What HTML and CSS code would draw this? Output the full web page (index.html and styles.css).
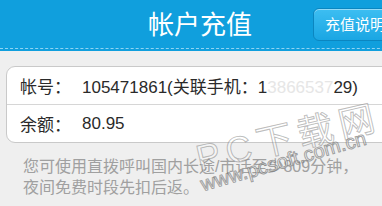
FILE: index.html
```html
<!DOCTYPE html>
<html lang="zh-CN">
<head>
<meta charset="utf-8">
<title>帐户充值</title>
<link rel="stylesheet" href="styles.css">
</head>
<body>
<div class="page">
  <header class="header">
    <div class="bar">
      <h1 class="title">帐户充值</h1>
      <button class="help-btn">充值说明</button>
    </div>
  </header>
  <section class="card">
    <div class="row">
      <span class="label">帐号：</span>
      <span class="value">105471861(关联手机：1<span class="blur">3866537</span>29)</span>
    </div>
    <div class="row">
      <span class="label">余额：</span>
      <span class="value">80.95</span>
    </div>
  </section>
  <p class="note">您可使用直拨呼叫国内长途/市话至少809分钟，<br>夜间免费时段先扣后返。</p>
  <div class="wm wm-big">PC下载网</div>
  <div class="wm wm-url">www.pcsoft.com.cn</div>
</div>
</body>
</html>
```

FILE: styles.css
```css
html, body {
  margin: 0;
  padding: 0;
  overflow: hidden;
  background: #efefef;
}
body {
  width: 382px;
  height: 206px;
  font-family: "Liberation Sans", "Noto Sans CJK SC", sans-serif;
}
.page {
  position: relative;
  width: 400px;
  height: 206px;
  background: #efefef;
}
.header {
  background: #109fdd;
  padding-bottom: 2px;
}
.bar {
  height: 49px;
  border-bottom: 1px dashed #8fd4f2;
  display: flex;
  align-items: center;
  box-sizing: border-box;
  padding-top: 1px;
}
.title {
  margin: 0 0 0 148px;
  font-size: 26px;
  font-weight: normal;
  color: #ffffff;
  line-height: 30px;
}
.help-btn {
  margin-left: auto;
  margin-right: 3px;
  height: 33px;
  margin-top: -1px;
  padding: 0 11px;
  border: 1px solid #0b86c0;
  border-radius: 6px;
  background: linear-gradient(#3dbef2, #1aa6e3);
  box-shadow: inset 0 1px 0 rgba(255,255,255,0.45);
  color: #ffffff;
  font-family: "Liberation Sans", "Noto Sans CJK SC", sans-serif;
  font-size: 15px;
  line-height: 31px;
}
.card {
  margin: 15px 6px 0 6px;
  background: #ffffff;
  border: 1px solid #c9c9c9;
  border-radius: 9px;
}
.row {
  height: 37px;
  display: flex;
  align-items: center;
  padding-left: 13px;
  font-size: 17px;
  color: #2a2a2a;
}
.row + .row {
  border-top: 1px solid #d6d6d6;
}
.label {
  width: 62px;
}
.blur {
  color: #e6e6e6;
}
.note {
  margin: 13px 0 0 23px;
  font-size: 16px;
  line-height: 21px;
  color: #a0a0a0;
}
.wm {
  position: absolute;
  white-space: nowrap;
  font-family: "Liberation Sans", "Noto Sans CJK SC", sans-serif;
}
.wm-big {
  left: 190px;
  top: 130px;
  font-size: 36px;
  letter-spacing: 6px;
  color: rgba(255,255,255,0.35);
  -webkit-text-stroke: 1px rgba(110,110,110,0.45);
  transform: rotate(-13deg);
  transform-origin: left top;
}
.wm-url {
  left: 198px;
  top: 174px;
  font-size: 20px;
  color: rgba(255,255,255,0.6);
  -webkit-text-stroke: 1px rgba(100,100,100,0.6);
  transform: rotate(-16deg);
  transform-origin: left top;
}
```
